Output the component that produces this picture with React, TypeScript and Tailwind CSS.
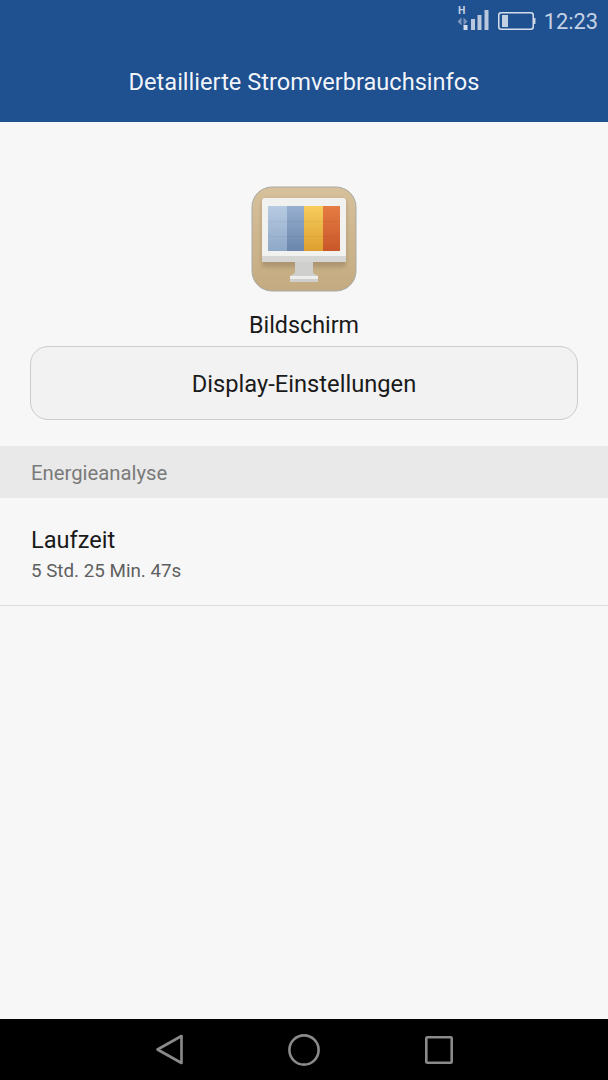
function StatusIcons() {
  return (
    <svg width="96" height="36" viewBox="0 0 96 36" className="shrink-0 mt-[2px]">
      {/* network type */}
      <text x="18" y="12" fill="#c3d0e2" fontSize="10.5" fontWeight="700" fontFamily="Roboto, sans-serif">H</text>
      <path d="M21.5 15.5l-4 4 4 4zM23.5 15.5l4 4-4 4z" fill="#7f97ba" />
      {/* signal bars */}
      <rect x="23.5" y="23" width="4" height="5" fill="#d5deea" />
      <rect x="31" y="17" width="4" height="11" fill="#b9c8dc" />
      <rect x="37.5" y="13" width="4" height="15" fill="#b9c8dc" />
      <rect x="44.5" y="8" width="4" height="20" fill="#b9c8dc" />
      {/* battery */}
      <rect x="58.75" y="10.75" width="34.5" height="16.5" rx="2.5" fill="none" stroke="#d5deea" strokeWidth="1.5" />
      <rect x="62" y="13" width="6" height="12" fill="#c3d0e2" />
      <rect x="94" y="16" width="1.5" height="6" fill="#c3d0e2" />
    </svg>
  );
}

function ScreenIcon() {
  return (
    <svg width="106" height="106" viewBox="0 0 106 106">
      <defs>
        <linearGradient id="tile" x1="0" y1="0" x2="0" y2="1">
          <stop offset="0" stopColor="#d6c19c" />
          <stop offset="1" stopColor="#c4aa80" />
        </linearGradient>
        <linearGradient id="blueA" x1="0" y1="0" x2="0" y2="1">
          <stop offset="0" stopColor="#b7cbe2" />
          <stop offset="1" stopColor="#8fa8c8" />
        </linearGradient>
        <linearGradient id="blueB" x1="0" y1="0" x2="0" y2="1">
          <stop offset="0" stopColor="#96afcf" />
          <stop offset="1" stopColor="#6a86ab" />
        </linearGradient>
        <linearGradient id="yellow" x1="0" y1="0" x2="0" y2="1">
          <stop offset="0" stopColor="#f7cd5c" />
          <stop offset="1" stopColor="#dd9f2e" />
        </linearGradient>
        <linearGradient id="red" x1="0" y1="0" x2="0" y2="1">
          <stop offset="0" stopColor="#e67c44" />
          <stop offset="1" stopColor="#c85729" />
        </linearGradient>
        <filter id="soft" x="-10%" y="-10%" width="120%" height="120%">
          <feGaussianBlur stdDeviation="0.6" />
        </filter>
        <filter id="shade" x="-20%" y="-20%" width="140%" height="140%">
          <feGaussianBlur stdDeviation="2" />
        </filter>
      </defs>
      <g filter="url(#soft)">
        <rect x="1" y="1" width="104" height="104" rx="20" fill="url(#tile)" stroke="#a9a9a4" strokeWidth="1" />
        {/* monitor shadow */}
        <rect x="11" y="14" width="84" height="67" rx="3" fill="#8f7a58" opacity="0.5" filter="url(#shade)" />
        {/* stand */}
        <path d="M44 76h18v11l5 3v6H39v-6l5-3z" fill="#cfcfcd" />
        <rect x="39" y="90" width="28" height="3" fill="#ededeb" />
        {/* monitor */}
        <rect x="11" y="12" width="84" height="64" rx="3" fill="#f1f1ef" />
        <rect x="11" y="70" width="84" height="6" fill="#d6d6d4" />
        {/* screen columns */}
        <rect x="17" y="20" width="19" height="45" fill="url(#blueA)" />
        <rect x="36" y="20" width="17" height="45" fill="url(#blueB)" />
        <rect x="53" y="20" width="19" height="45" fill="url(#yellow)" />
        <rect x="72" y="20" width="17" height="45" fill="url(#red)" />
        <path d="M17 35h72v1H17zM17 50h72v1H17z" fill="#000" opacity="0.04" />
      </g>
    </svg>
  );
}

export default function App() {
  return (
    <div className="flex flex-col h-[1080px] w-[608px] overflow-hidden bg-[#f7f7f7] font-['Roboto',sans-serif]">
      {/* Header */}
      <header className="h-[122px] shrink-0 bg-[#1f5191] flex flex-col">
        <div className="h-[42px] flex items-start justify-end pr-[10px] gap-[8px]">
          <StatusIcons />
          <span className="text-[21.8px] leading-[44px] h-[42px] text-[#c6d3e4]">12:23</span>
        </div>
        <h1 className="text-center text-[23.6px] leading-[80px] text-white/95">Detaillierte Stromverbrauchsinfos</h1>
      </header>

      {/* Main */}
      <main className="flex-1 flex flex-col">
        <div className="flex flex-col items-center pt-[64px]">
          <ScreenIcon />
          <div className="mt-[18px] text-[23.3px] leading-[30px] text-[#1a1a1a]">Bildschirm</div>
        </div>
        <div className="px-[30px] mt-[6px]">
          <button className="w-full h-[74px] pt-[3px] rounded-[18px] border border-[#cccccc] bg-[#f2f2f2] text-[23.7px] text-[#1a1a1a]">
            Display-Einstellungen
          </button>
        </div>

        <div className="mt-[26px] h-[52px] pt-[2px] bg-[#e9e9e9] pl-[31px] flex items-center text-[20.3px] text-[#7a7a7a]">
          Energieanalyse
        </div>

        <div className="h-[108px] pl-[31px] pt-[26px] border-b border-[#dcdcdc]">
          <div className="text-[23.6px] leading-[32px] text-[#1a1a1a]">Laufzeit</div>
          <div className="text-[18.8px] leading-[26px] mt-[2px] text-[#5f5f5f]">5 Std. 25 Min. 47s</div>
        </div>
      </main>

      {/* Nav bar */}
      <nav className="h-[61px] shrink-0 bg-black flex items-center justify-center gap-[105px] pl-[1px]">
        <svg width="27" height="31" viewBox="0 0 27 31" fill="none" stroke="#8a8a8a" strokeWidth="2.6" strokeLinejoin="round">
          <path d="M25.5 2v27L1.5 15.5z" />
        </svg>
        <svg width="32" height="32" viewBox="0 0 32 32" fill="none" stroke="#8a8a8a" strokeWidth="2.6">
          <circle cx="16" cy="16" r="14.6" />
        </svg>
        <svg width="28" height="28" viewBox="0 0 28 28" fill="none" stroke="#8a8a8a" strokeWidth="2.6" strokeLinejoin="round">
          <rect x="1.3" y="1.3" width="25.4" height="25.4" rx="1" />
        </svg>
      </nav>
    </div>
  );
}
